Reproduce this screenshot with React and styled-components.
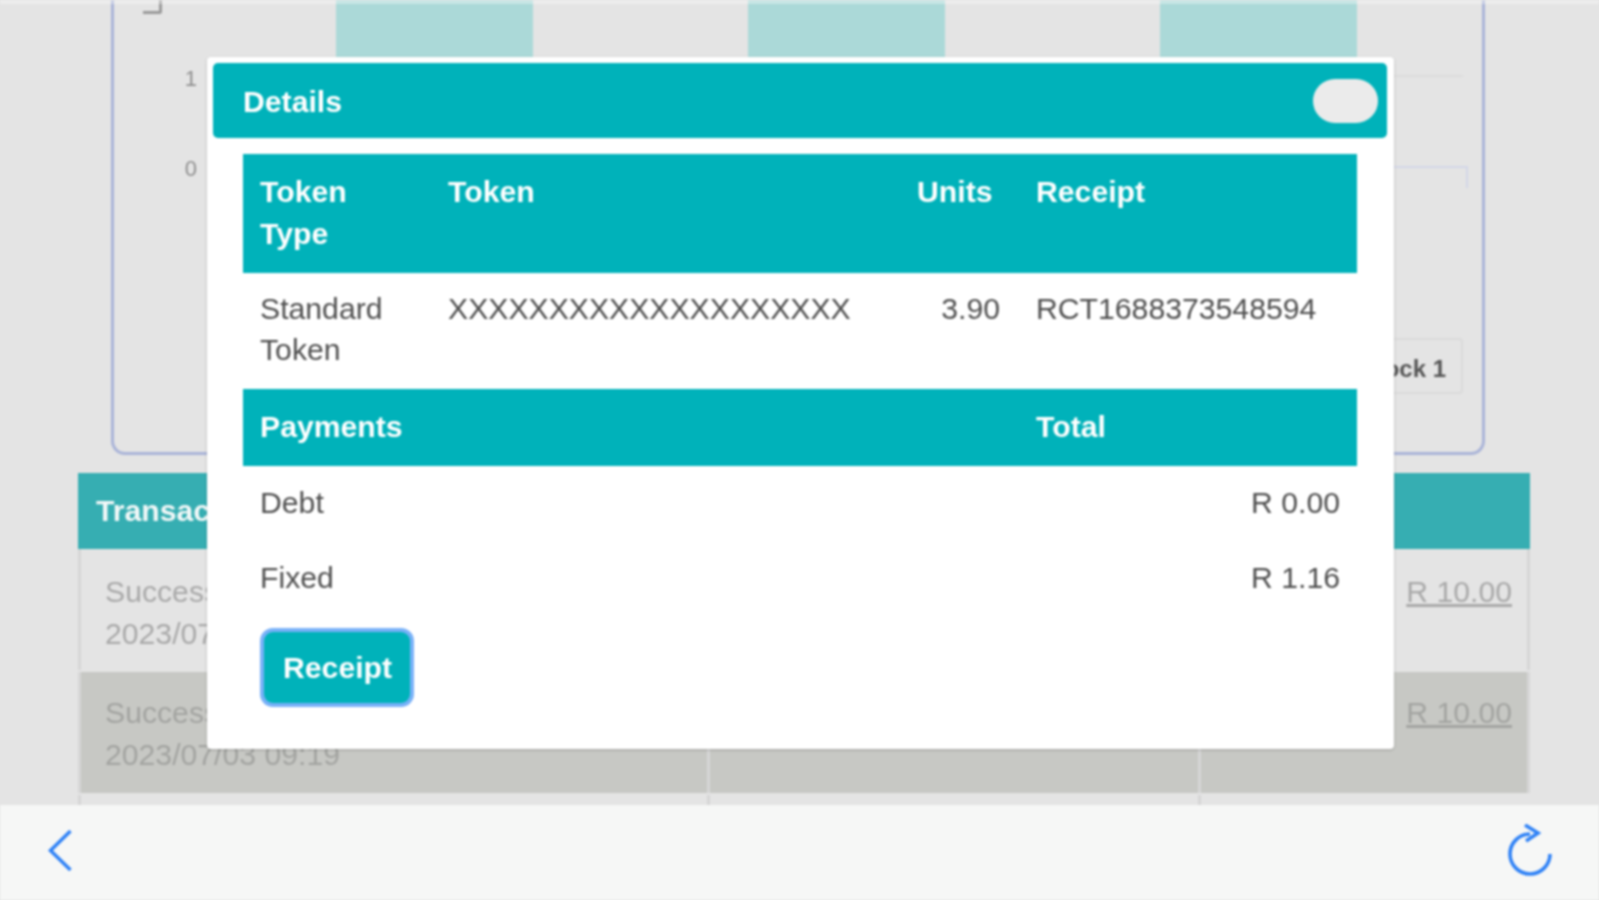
import React from 'react'
import styled, { createGlobalStyle } from 'styled-components'

const TEAL = '#00b2ba'
const BLUE = '#2f82f6'

const GlobalStyle = createGlobalStyle`
  html, body {
    margin: 0;
    background: #e4e4e4;
    overflow: hidden;
  }
  * {
    box-sizing: border-box;
  }
`

const App = () => (
  <>
    <GlobalStyle />
    <Page>
      <Main>
        <ChartCard>
          <BarRow>
            <AxisCorner />
            <Bars>
              <Bar />
              <Bar />
              <Bar />
            </Bars>
          </BarRow>
          <AxisRow>
            <AxisLabel>1</AxisLabel>
            <GridLine />
          </AxisRow>
          <AxisRow $tall>
            <AxisLabel>0</AxisLabel>
            <GridLine $base />
          </AxisRow>
          <Legend>
            <LegendButton>Block 1</LegendButton>
          </Legend>
        </ChartCard>

        <TransactionTable>
          <TransactionHead>Transactions</TransactionHead>
          <TransactionRow>
            <TransactionCell $top="22px">Successful<br />2023/07/03 09:19</TransactionCell>
            <TransactionCell />
            <TransactionCell $top="22px" $amount><Amount>R 10.00</Amount></TransactionCell>
          </TransactionRow>
          <TransactionRow $shaded>
            <TransactionCell $top="20px">Successful<br />2023/07/03 09:19</TransactionCell>
            <TransactionCell />
            <TransactionCell $top="20px" $amount><Amount>R 10.00</Amount></TransactionCell>
          </TransactionRow>
          <TransactionRow $stub>
            <TransactionCell />
            <TransactionCell />
            <TransactionCell />
          </TransactionRow>
        </TransactionTable>
      </Main>

      <Toolbar>
        <BackIcon width="24" height="42" viewBox="0 0 24 42" fill="none" stroke={BLUE} strokeWidth="3.5">
          <polyline points="22.5,2 2.5,21.5 22.5,41" />
        </BackIcon>
        <svg width="44" height="52" viewBox="0 0 44 52" fill="none" stroke={BLUE} strokeWidth="3.6">
          <path d="M22 10 A20 20 0 1 0 42 30" />
          <path d="M17 1 L30 9 L18 17" />
        </svg>
      </Toolbar>

      <Modal>
        <ModalHeader>
          <ModalTitle>Details</ModalTitle>
          <CloseButton />
        </ModalHeader>
        <ModalBody>
          <TokenHead>
            <HeadCell>Token Type</HeadCell>
            <HeadCell>Token</HeadCell>
            <HeadCell>Units</HeadCell>
            <HeadCell>Receipt</HeadCell>
          </TokenHead>
          <TokenRow>
            <TokenCell>Standard Token</TokenCell>
            <TokenCell>XXXXXXXXXXXXXXXXXXXX</TokenCell>
            <TokenCell $right>3.90</TokenCell>
            <TokenCell>RCT1688373548594</TokenCell>
          </TokenRow>
          <PaymentHead>
            <HeadCell>Payments</HeadCell>
            <HeadCell>Total</HeadCell>
          </PaymentHead>
          <PaymentRow>
            <Cell>Debt</Cell>
            <Cell $right>R 0.00</Cell>
          </PaymentRow>
          <PaymentRow>
            <Cell>Fixed</Cell>
            <Cell $right>R 1.16</Cell>
          </PaymentRow>
          <ReceiptButton>Receipt</ReceiptButton>
        </ModalBody>
      </Modal>
    </Page>
  </>
)

export default App

const Page = styled.div`
  position: relative;
  display: flex;
  flex-direction: column;
  height: 900px;
  overflow: hidden;
  background: #e4e4e4;
  font-family: 'Liberation Sans', Arial, sans-serif;
  font-size: 30.2px;
  line-height: 41.5px;
  color: #4f4f4f;
  filter: blur(0.8px);
`

const Main = styled.div`
  position: relative;
  flex: 1;
  min-height: 0;
  overflow: hidden;
  padding: 0 69px 0 78px;

  &::before {
    content: '';
    position: absolute;
    top: 0;
    left: 0;
    right: 0;
    height: 4px;
    background: rgba(255, 255, 255, 0.35);
  }
`

const ChartCard = styled.div`
  display: flex;
  flex-direction: column;
  height: 455px;
  margin: 0 45px 0 33px;
  padding-right: 19px;
  border: 3px solid #aab4d8;
  border-top: 0;
  border-radius: 0 0 14px 14px;
`

const BarRow = styled.div`
  display: flex;
  height: 57px;
`

const AxisCorner = styled.div`
  flex: none;
  width: 19px;
  height: 14px;
  margin-left: 29px;
  border-right: 3px solid #9a9a9a;
  border-bottom: 3px solid #9a9a9a;
  border-radius: 0 0 3px 0;
`

const Bars = styled.div`
  display: flex;
  gap: 215.5px;
  margin-left: 174px;
`

const Bar = styled.div`
  width: 196.5px;
  background: #abd9d8;
`

const AxisRow = styled.div`
  display: flex;
  height: ${({ $tall }) => ($tall ? '191px' : '90px')};
`

const AxisLabel = styled.div`
  flex: none;
  width: 83px;
  padding-top: 10px;
  font-size: 22px;
  line-height: 24px;
  text-align: right;
  color: #8f8f8f;
`

const GridLine = styled.div`
  flex: 1;
  height: ${({ $base }) => ($base ? '22px' : '1px')};
  margin: ${({ $base }) => ($base ? '19px -5px 0 10px' : '18px 0 0 10px')};
  border-top: 2px solid ${({ $base }) => ($base ? '#d3d7e8' : '#dcdcdc')};
  border-right: ${({ $base }) => ($base ? '2px solid #d3d7e8' : '0')};
`

const Legend = styled.div`
  display: flex;
  justify-content: flex-end;
`

const LegendButton = styled.div`
  height: 56px;
  padding: 0 15px 0 16px;
  border: 2px solid #dadada;
  border-radius: 4px;
  font-size: 24px;
  font-weight: 700;
  line-height: 58px;
  color: #555;
`

const TransactionTable = styled.div`
  margin-top: 18px;
`

const TransactionHead = styled.div`
  height: 76px;
  padding: 17px 18px;
  background: #36aeb2;
  font-weight: 700;
  color: #f2f8f8;
`

const TransactionRow = styled.div`
  display: grid;
  grid-template-columns: 629px 491px 332px;
  height: ${({ $stub }) => ($stub ? '10px' : '123px')};
  padding-bottom: ${({ $stub }) => ($stub ? '0' : '2px')};
  background: ${({ $shaded }) => ($shaded ? '#c7c8c4' : '#e4e4e4')};
  background-clip: content-box;
  color: ${({ $shaded }) => ($shaded ? '#a3a4a1' : '#a9a9a9')};
`

const TransactionCell = styled.div`
  padding: ${({ $top = '20px', $amount }) => ($amount ? `${$top} 15px 0 0` : `${$top} 0 0 24px`)};
  border-left: 3px solid #d6d6d6;
  border-right: ${({ $amount }) => ($amount ? '3px solid #d6d6d6' : '0')};
  text-align: ${({ $amount }) => ($amount ? 'right' : 'left')};
`

const Amount = styled.span`
  text-decoration: underline;
`

const Toolbar = styled.div`
  flex: none;
  display: flex;
  align-items: center;
  justify-content: space-between;
  height: 95px;
  padding: 0 47px 5px 48px;
  background: #f6f7f6;
`

const BackIcon = styled.svg`
  display: block;
`

const Modal = styled.div`
  position: absolute;
  top: 57px;
  left: 207px;
  width: 1187px;
  height: 692px;
  padding: 6px 7px 0 6px;
  border-radius: 4px;
  background: #fff;
  box-shadow: 0 1px 3px rgba(0, 0, 0, 0.2);
`

const ModalHeader = styled.div`
  display: flex;
  align-items: center;
  justify-content: space-between;
  height: 75px;
  padding: 0 9px 0 30px;
  border-radius: 5px;
  background: ${TEAL};
  font-weight: 700;
  color: #fff;
`

const ModalTitle = styled.div`
  padding-top: 2px;
`

const CloseButton = styled.div`
  width: 65px;
  height: 44px;
  border-radius: 22px;
  background: #ebebeb;
`

const ModalBody = styled.div`
  display: flex;
  flex-direction: column;
  align-items: flex-start;
  margin: 16px 30px 0 30px;
`

const Cell = styled.div`
  padding: 16px 17px;
  text-align: ${({ $right }) => ($right ? 'right' : 'left')};
`

const HeadCell = styled(Cell)`
  padding-top: 17px;
`

const TokenCell = styled(Cell)`
  padding: 15px ${({ $right }) => ($right ? '19px' : '17px')} 16px 17px;
  line-height: 41px;
`

const TokenRow = styled.div`
  display: grid;
  grid-template-columns: 188px 469px 119px 338px;
  width: 1114px;
  height: 116px;
`

const TokenHead = styled(TokenRow)`
  height: 119px;
  background: ${TEAL};
  font-weight: 700;
  color: #fff;
`

const PaymentRow = styled.div`
  display: grid;
  grid-template-columns: 776px 338px;
  width: 1114px;
  height: 75px;
`

const PaymentHead = styled(PaymentRow)`
  height: 77px;
  background: ${TEAL};
  font-weight: 700;
  color: #fff;
`

const ReceiptButton = styled.div`
  margin: 16px 0 0 21px;
  padding: 15px 18px 14px 19px;
  border-radius: 9px;
  background: ${TEAL};
  box-shadow: 0 0 0 4px #78b1f8;
  font-weight: 700;
  color: #fff;
`
